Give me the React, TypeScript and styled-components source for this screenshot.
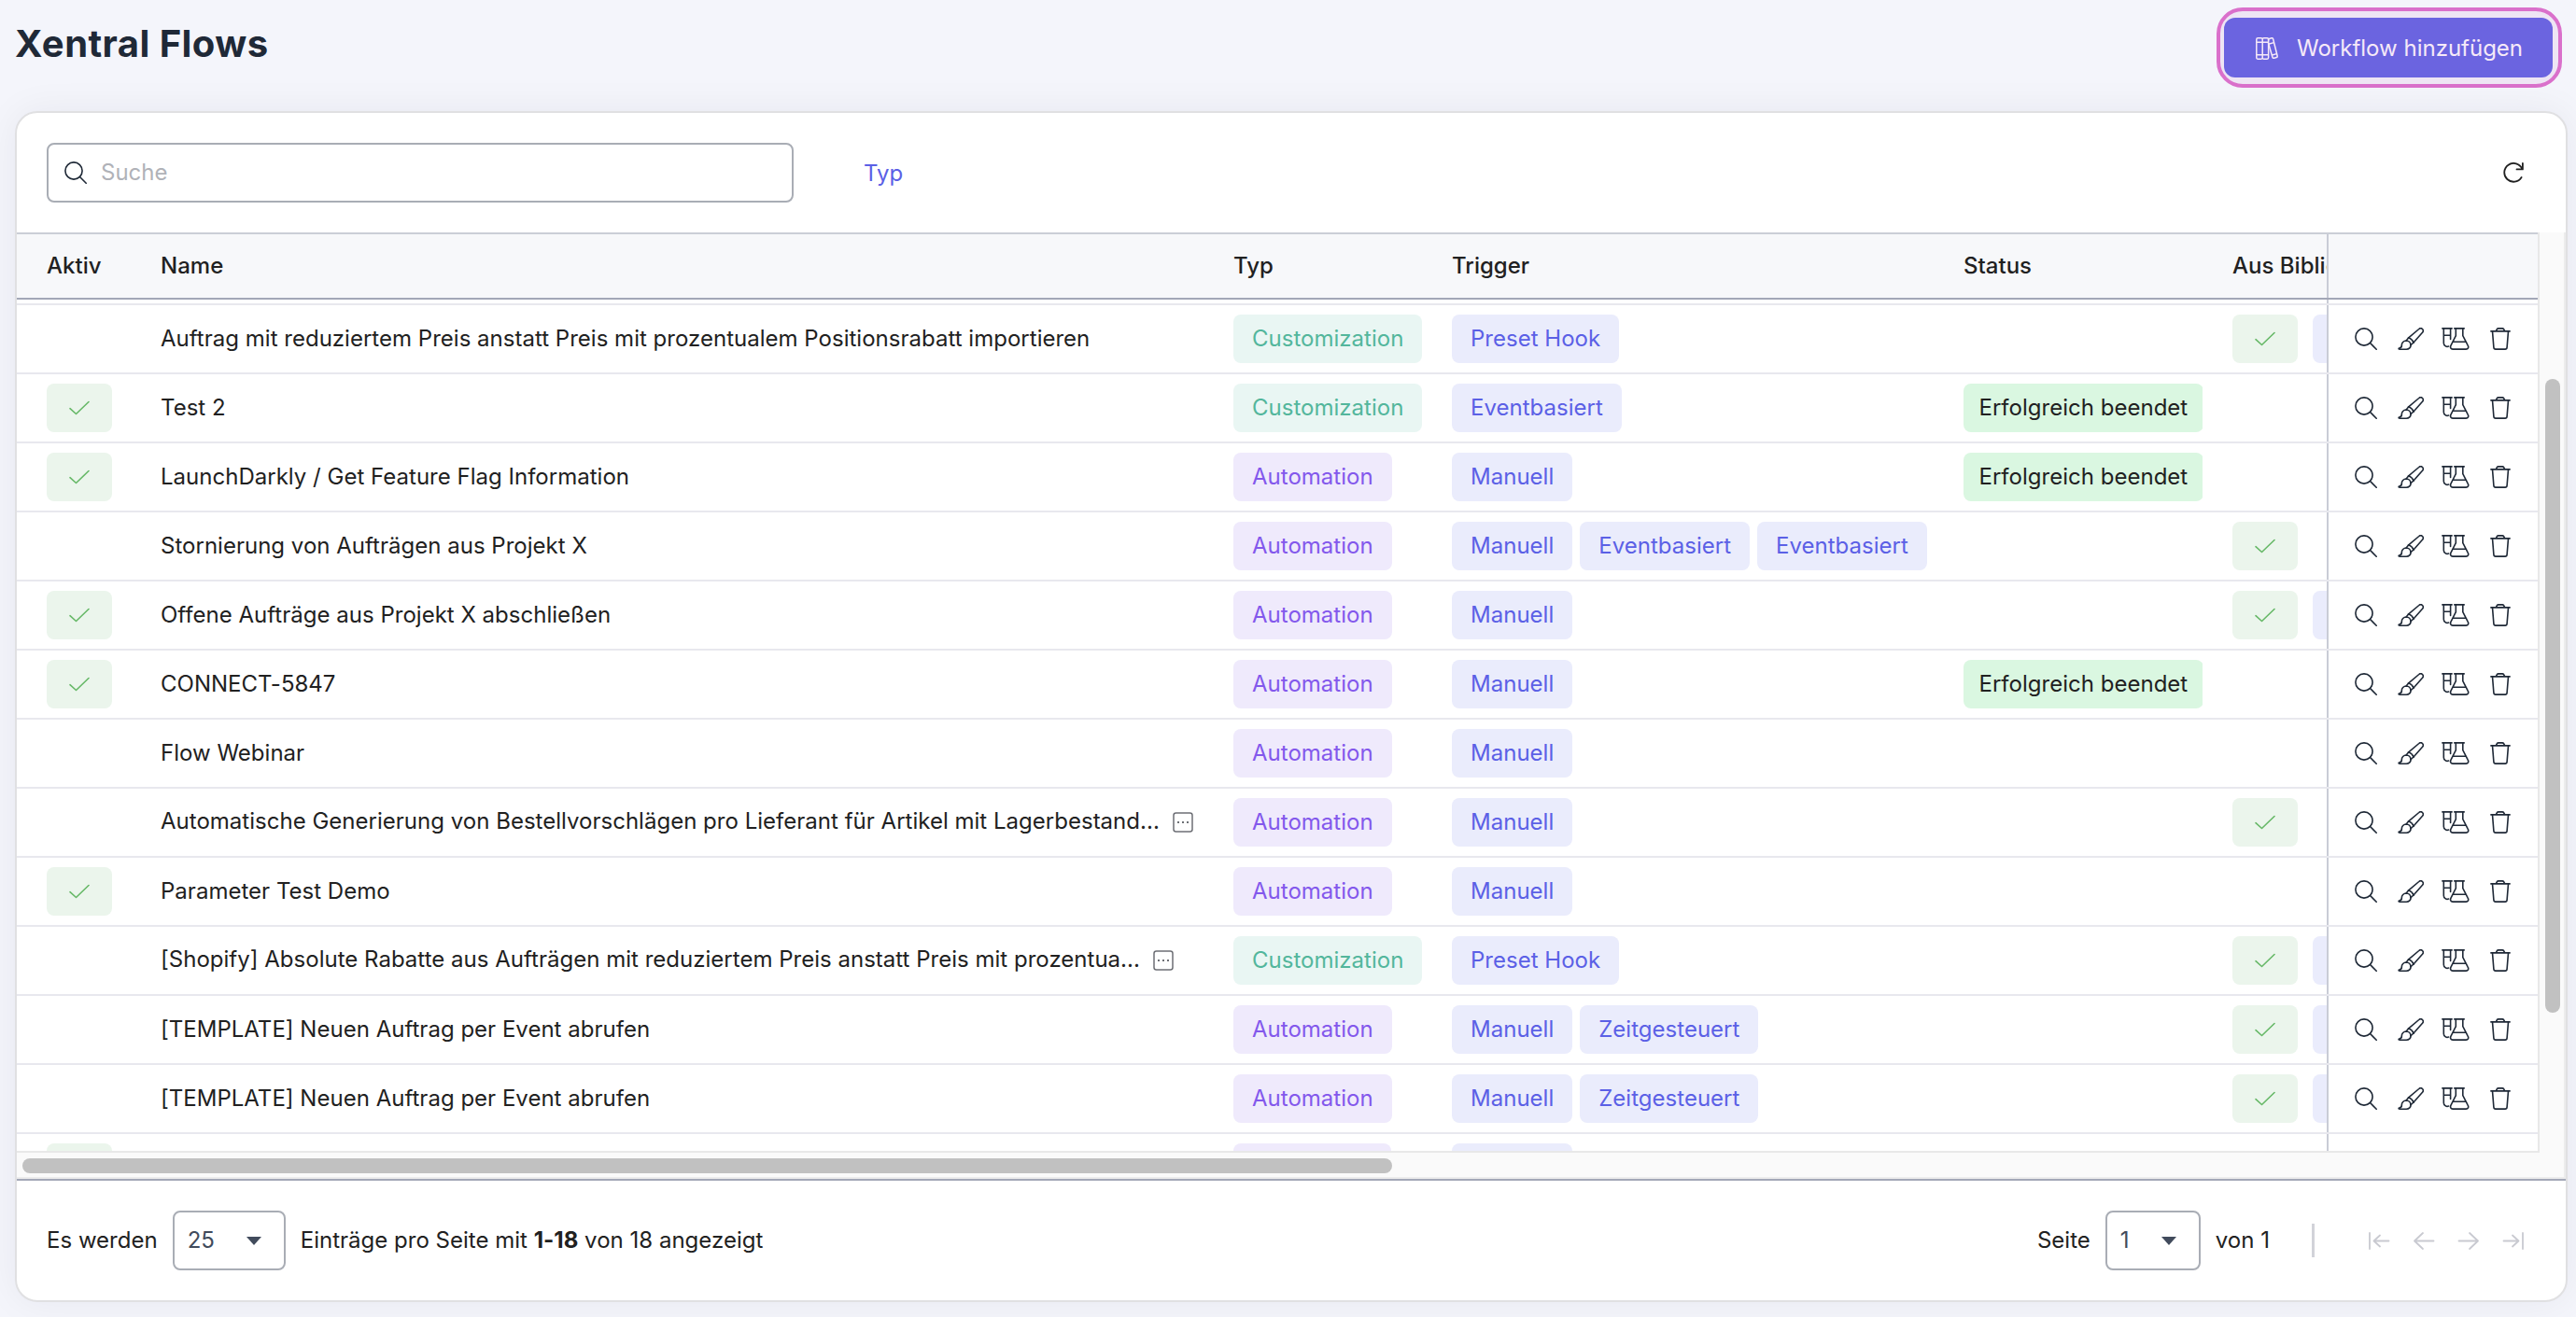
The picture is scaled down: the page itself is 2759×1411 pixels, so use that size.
import React from "react";
import styled, { createGlobalStyle, css } from "styled-components";

const Global = createGlobalStyle`
  * { box-sizing: border-box; }
  html, body { margin: 0; padding: 0; }
  body {
    background: #f4f5fb;
    font-family: Inter, "Liberation Sans", sans-serif;
    font-size: 24px;
    line-height: 36px;
    letter-spacing: 0.015px;
    color: #212121;
    overflow: hidden;
  }
`;

const Page = styled.div`
  width: 100%;
  height: 1411px;
  padding: 8px 9px 16px 16px;
  display: flex;
  flex-direction: column;
  overflow: hidden;
`;

const PageHeader = styled.header`
  height: 111px;
  flex: none;
  display: flex;
  justify-content: space-between;
  align-items: flex-start;
  padding-right: 6px;
`;

const Title = styled.h1`
  margin: 15px 0 0;
  font-size: 40px;
  line-height: 48px;
  font-weight: 700;
  letter-spacing: 0.45px;
  color: #1f2937;
`;

const Highlight = styled.div`
  border: 4px solid #da70cb;
  border-radius: 28px;
  background: #eee5f4;
  padding: 7px 6px 7px 4px;
  height: 86px;
`;

const PrimaryButton = styled.button`
  width: 352px;
  height: 64px;
  border: 0;
  border-radius: 12px;
  background: #6b64e0;
  color: #f6e9f8;
  font: 400 24px/36px Inter, sans-serif;
  display: flex;
  align-items: center;
  padding: 1px 0 0 34px;
  gap: 20px;
  white-space: nowrap;
`;

const Card = styled.section`
  width: 2734px;
  height: 1276px;
  flex: none;
  display: flex;
  flex-direction: column;
  background: #fff;
  border: 2px solid #e0e0e2;
  border-radius: 24px;
  box-shadow: 0 0 40px rgba(30, 30, 50, 0.06);
  overflow: hidden;
`;

const Toolbar = styled.div`
  height: 128px;
  flex: none;
  display: flex;
  align-items: center;
  padding: 0 45px 0 32px;
`;

const Search = styled.label`
  width: 800px;
  height: 64px;
  border: 2px solid #a9adb5;
  border-radius: 8px;
  display: flex;
  align-items: center;
  gap: 15px;
  padding-left: 17px;
  color: #b0b2b8;
`;

const Filter = styled.span`
  margin-left: 75px;
  padding-top: 2px;
  color: #5b60e6;
`;

const Spacer = styled.span`
  flex: 1;
`;

const TableArea = styled.div`
  height: 1016px;
  flex: none;
  display: grid;
  grid-template-columns: 2700px 30px;
  grid-template-rows: 984px 30px;
  border-bottom: 2px solid #a3a7b7;
`;

const Viewport = styled.div`
  display: flex;
  flex-direction: column;
  overflow: hidden;
`;

const columns = css`
  display: grid;
  grid-template-columns: 122px 1149px 234px 548px 288px 133px 226px;
  align-items: center;
`;

const HeadRow = styled.div`
  ${columns}
  height: 72px;
  flex: none;
  border-top: 2px solid #cbced6;
  border-bottom: 2px solid #a3a7b7;
  background: #f7f8fa;
  font-weight: 500;
`;

const FirstGap = styled.div`
  ${columns}
  height: 6px;
  flex: none;
  border-bottom: 2px solid #e8e8ee;
`;

const Row = styled.div`
  ${columns}
  height: 74px;
  flex: none;
  border-bottom: 2px solid #e8e8ee;
`;

const Cell = styled.div<{ $gap?: number }>`
  height: 100%;
  display: flex;
  align-items: center;
  gap: ${(p) => p.$gap ?? 8}px;
  padding-left: 32px;
  white-space: nowrap;
  overflow: hidden;
`;

const Name = styled.span<{ $raised?: boolean }>`
  padding-bottom: ${(p) => (p.$raised ? 2 : 0)}px;
`;

const Pinned = styled.div`
  height: 100%;
  border-left: 2px solid #c9ccd6;
  display: flex;
  align-items: center;
  padding-left: 24px;
`;

const IconSlot = styled.span<{ $w: number }>`
  width: ${(p) => p.$w}px;
  height: 32px;
  display: flex;
  align-items: center;
  justify-content: center;
  color: #1f2937;
`;

const palette = {
  green: ["#e9f6f3", "#53b69c"],
  purple: ["#efeafc", "#8358ec"],
  blue: ["#eaecfc", "#5b60e6"],
  success: ["#daf7e1", "#212121"],
  check: ["#ebf5ec", "#66b867"],
};

const Badge = styled.span<{ $tone: keyof typeof palette; $pad?: number }>`
  height: 52px;
  flex: none;
  display: inline-flex;
  align-items: center;
  justify-content: center;
  padding: 0 ${(p) => p.$pad ?? 20}px;
  border-radius: 8px;
  background: ${(p) => palette[p.$tone][0]};
  color: ${(p) => palette[p.$tone][1]};
`;

const CheckBadge = styled(Badge)`
  width: 70px;
  padding: 0;
`;

const VBar = styled.div`
  background: #fafafa;
  border-left: 2px solid #e8e8e8;
  border-right: 2px solid #ececec;
  padding: 157px 4px 0 6px;
`;

const VThumb = styled.div`
  height: 679px;
  border-radius: 8px;
  background: #c1c1c1;
`;

const HBar = styled.div`
  grid-column: 1 / 3;
  display: grid;
  grid-template-columns: 2702px 28px;
  background: #fafafa;
  border-bottom: 2px solid #ececec;
`;

const HTrack = styled.div`
  border-top: 2px solid #e8e8e8;
  padding: 6px 0 0 6px;
`;

const Corner = styled.div`
  border-right: 2px solid #ececec;
`;

const HThumb = styled.div`
  width: 1467px;
  height: 16px;
  border-radius: 8px;
  background: #c1c1c1;
`;

const Footer = styled.footer`
  flex: 1;
  display: flex;
  align-items: center;
  padding: 0 44px 0 32px;
  white-space: nowrap;
`;

const Select = styled.div<{ $w: number }>`
  width: ${(p) => p.$w}px;
  height: 64px;
  margin: 0 16px;
  padding: 0 24px 0 14px;
  border: 2px solid #a9adb5;
  border-radius: 8px;
  display: flex;
  align-items: center;
  justify-content: space-between;
  color: #414b5c;
`;

const Divider = styled.span`
  width: 3px;
  height: 36px;
  background: #d2d3d9;
  margin: 0 57px 0 45px;
`;

const Pager = styled.div`
  display: flex;
  gap: 24px;
  color: #c9cad1;
`;

const MoreSlot = styled.span`
  display: flex;
  margin-left: 6px;
  color: #6d6f75;
`;

const Svg = ({ w = 24, h = 24, sw = 1.6, children }: {
  w?: number; h?: number; sw?: number; children: React.ReactNode;
}) => (
  <svg width={w} height={h} viewBox={`0 0 ${w} ${h}`} fill="none" stroke="currentColor"
    strokeWidth={sw} strokeLinecap="round" strokeLinejoin="round">
    {children}
  </svg>
);

const SearchIcon = () => (
  <Svg><circle cx="10" cy="10" r="9.100" /><path d="M16.500 16.500 23.200 23.200" /></Svg>
);
const BrushIcon = () => (
  <Svg w={28}>
    <path d="M11.700 10.800 22.800 1.500a2.500 2.500 0 0 1 3.700 3.700L17 16" />
    <path d="M11.700 10.800c2.400.9 4.300 2.800 5.300 5.200" />
    <path d="M11.700 10.800 9.200 14M17 16 14 18.700" />
    <path d="M9.200 14c-2.900 0-4.900 2.200-4.900 5 .1 1.600-.7 2.500-2.200 2.700-1.300.1-1.400 1.500 0 1.500h7.100c3 0 5-2.100 4.800-4.500A4.900 4.900 0 0 0 9.200 14Z" />
  </Svg>
);
const FlaskIcon = () => (
  <Svg w={30}>
    <path d="M.9.9h10.200M2.300.9v15.600a3.900 3.900 0 0 0 5.300 3.600M9.600.9v11.600M2.300 8.300h7.300" />
    <path d="M13.800.9h10.400M15.300.9v7.800L10 19.100c-1.100 2.200-.1 4 2 4h14.200c2.200 0 3.200-1.900 2-4L22.800 8.700V.9M12.200 15.300h13.900" />
  </Svg>
);
const TrashIcon = () => (
  <Svg w={22}>
    <path d="M.9 3.900h20.200M2.500 3.900l1.400 17.300c.1 1.200.9 1.900 2 1.900h10.200c1.100 0 1.900-.7 2-1.900L19.500 3.900M6.300 3.700l1-1.900C7.700 1.200 8.200.9 8.900.9h4.200c.7 0 1.200.3 1.600.9l1 1.900" />
  </Svg>
);
const BooksIcon = () => (
  <Svg w={24} sw={1.5}>
    <path d="M.8 2.200C.8 1.400 1.400.8 2.200.8h3.600c.8 0 1.400.6 1.400 1.400v19.600c0 .8-.6 1.400-1.400 1.400H2.200c-.8 0-1.400-.6-1.400-1.400ZM7.200 2.200c0-.8.600-1.400 1.400-1.400h3.600c.8 0 1.400.6 1.400 1.400v19.600c0 .8-.6 1.400-1.400 1.400H8.600c-.8 0-1.400-.6-1.400-1.400M.8 5.300h12.800M.8 18.700h12.800" />
    <path d="M13.600 3.100c-.2-.8.200-1.400.9-1.600l2.500-.7c.8-.2 1.400.2 1.600.9l4.500 18.100c.2.800-.2 1.500-.9 1.700l-2.600.7c-.8.200-1.500-.2-1.700-.9L13.600 6.500M14.400 7l5.200-1.400M17.500 19l5.100-1.400" />
  </Svg>
);
const RefreshIcon = () => (
  <Svg w={22} h={22} sw={1.800}>
    <path d="M20.900 1v6.400h-6.400M20.300 7A9.900 9.900 0 1 0 19.600 16" />
  </Svg>
);
const CheckIcon = () => (
  <Svg w={22} h={16} sw={1.600}><path d="M1 8.700 7.500 14.500 21 1.500" /></Svg>
);
const MoreIcon = () => (
  <Svg w={22} h={22} sw={1.500}>
    <rect x="1" y="1" width="20" height="20" rx="2.500" />
    <path d="M5 11h2M10 11h2M15 11h2" strokeWidth={2} strokeLinecap="butt" />
  </Svg>
);
const Caret = () => (
  <svg width="16" height="9" viewBox="0 0 16 9"><path d="M0 0h16L8 9Z" fill="#414b5c" /></svg>
);

const arrows = [
  "M2 4v17M22.500 12.500H7M13 6.500 6.500 12.500 13 18.500",
  "M22.500 12.500H2M11 4 2 12.500 11 21",
  "M1.500 12.500H22M13 4 22 12.500 13 21",
  "M22 4v17M1.500 12.500H17M11 6.500 17.500 12.500 11 18.500",
];

type RowData = {
  active?: boolean; name: string; more?: boolean; type: "C" | "A";
  triggers: string[]; done?: boolean; lib?: boolean; extra?: boolean; last?: boolean;
};

const rows: RowData[] = [
  { name: "Auftrag mit reduziertem Preis anstatt Preis mit prozentualem Positionsrabatt importieren", type: "C", triggers: ["Preset Hook"], lib: true, extra: true },
  { active: true, name: "Test 2", type: "C", triggers: ["Eventbasiert"], done: true },
  { active: true, name: "LaunchDarkly / Get Feature Flag Information", type: "A", triggers: ["Manuell"], done: true },
  { name: "Stornierung von Aufträgen aus Projekt X", type: "A", triggers: ["Manuell", "Eventbasiert", "Eventbasiert"], lib: true },
  { active: true, name: "Offene Aufträge aus Projekt X abschließen", type: "A", triggers: ["Manuell"], lib: true, extra: true },
  { active: true, name: "CONNECT-5847", type: "A", triggers: ["Manuell"], done: true },
  { name: "Flow Webinar", type: "A", triggers: ["Manuell"] },
  { name: "Automatische Generierung von Bestellvorschlägen pro Lieferant für Artikel mit Lagerbestand...", more: true, type: "A", triggers: ["Manuell"], lib: true },
  { active: true, name: "Parameter Test Demo", type: "A", triggers: ["Manuell"] },
  { name: "[Shopify] Absolute Rabatte aus Aufträgen mit reduziertem Preis anstatt Preis mit prozentua...", more: true, type: "C", triggers: ["Preset Hook"], lib: true, extra: true },
  { name: "[TEMPLATE] Neuen Auftrag per Event abrufen", type: "A", triggers: ["Manuell", "Zeitgesteuert"], lib: true, extra: true },
  { name: "[TEMPLATE] Neuen Auftrag per Event abrufen", type: "A", triggers: ["Manuell", "Zeitgesteuert"], lib: true, extra: true },
];

const Slot = styled(Badge)<{ $w: number }>`
  width: ${(p) => p.$w}px;
  padding: 0;
`;

const FlowRow = ({ row }: { row: RowData }) => (
  <Row>
    <Cell>{row.active && <CheckBadge $tone="check"><CheckIcon /></CheckBadge>}</Cell>
    <Cell>
      <Name $raised={row.more}>{row.name}</Name>
      {row.more && <MoreSlot><MoreIcon /></MoreSlot>}
    </Cell>
    <Cell>
      {row.type === "C" ? <Badge $tone="green">Customization</Badge> : <Badge $tone="purple">Automation</Badge>}
    </Cell>
    <Cell>{row.triggers.map((t, i) => <Badge $tone="blue" key={i}>{t}</Badge>)}</Cell>
    <Cell>{row.done && <Badge $tone="success" $pad={16.5}>Erfolgreich beendet</Badge>}</Cell>
    <Cell $gap={16}>
      {row.lib && <CheckBadge $tone="check"><CheckIcon /></CheckBadge>}
      {row.extra && <Slot $tone="blue" $w={70} />}
    </Cell>
    <Pinned>
      <IconSlot $w={32}><SearchIcon /></IconSlot>
      <IconSlot $w={64}><BrushIcon /></IconSlot>
      <IconSlot $w={31}><FlaskIcon /></IconSlot>
      <IconSlot $w={66}><TrashIcon /></IconSlot>
    </Pinned>
  </Row>
);

/* Only the top edge of this row's badges is scrolled into view. */
const PeekRow = () => (
  <Row>
    <Cell><Slot $tone="check" $w={70} /></Cell>
    <Cell />
    <Cell><Slot $tone="purple" $w={169} /></Cell>
    <Cell><Slot $tone="blue" $w={129} /></Cell>
    <Cell />
    <Cell />
    <Pinned />
  </Row>
);

export default function App() {
  return (
    <>
      <Global />
      <Page>
        <PageHeader>
          <Title>Xentral Flows</Title>
          <Highlight>
            <PrimaryButton><BooksIcon />Workflow hinzufügen</PrimaryButton>
          </Highlight>
        </PageHeader>
        <Card>
          <Toolbar>
            <Search><IconSlot $w={24}><SearchIcon /></IconSlot>Suche</Search>
            <Filter>Typ</Filter>
            <Spacer />
            <RefreshIcon />
          </Toolbar>
          <TableArea>
            <Viewport>
              <HeadRow>
                <Cell>Aktiv</Cell>
                <Cell>Name</Cell>
                <Cell>Typ</Cell>
                <Cell>Trigger</Cell>
                <Cell>Status</Cell>
                <Cell>Aus Bibliothek</Cell>
                <Pinned />
              </HeadRow>
              <FirstGap><i /><i /><i /><i /><i /><i /><Pinned /></FirstGap>
              {rows.map((row, i) => <FlowRow row={row} key={i} />)}
              <PeekRow />
            </Viewport>
            <VBar><VThumb /></VBar>
            <HBar>
              <HTrack><HThumb /></HTrack>
              <Corner />
            </HBar>
          </TableArea>
          <Footer>
            <span>Es werden</span>
            <Select $w={121}>25<Caret /></Select>
            <span>Einträge pro Seite mit <b>1-18</b> von 18 angezeigt</span>
            <Spacer />
            <span>Seite</span>
            <Select $w={102}>1<Caret /></Select>
            <span>von 1</span>
            <Divider />
            <Pager>
              {arrows.map((d) => <Svg key={d} sw={1.800}><path d={d} /></Svg>)}
            </Pager>
          </Footer>
        </Card>
      </Page>
    </>
  );
}
